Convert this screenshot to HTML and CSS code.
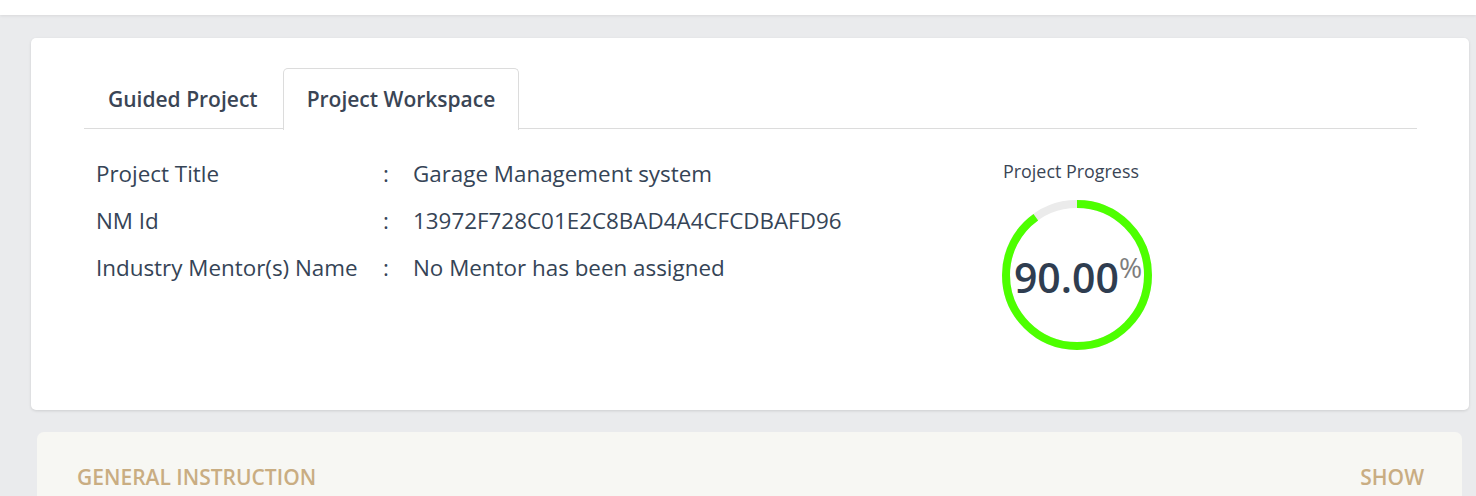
FILE: index.html
```html
<!DOCTYPE html>
<html>
<head>
<meta charset="utf-8">
<link rel="stylesheet" href="styles.css">
</head>
<body>
<header class="topbar"></header>
<main class="page">
  <section class="card">
    <nav class="tabs">
      <div class="tab">Guided Project</div>
      <div class="tab active">Project Workspace</div>
    </nav>
    <div class="content">
      <div class="details">
        <div class="row"><span class="label">Project Title</span><span class="colon">:</span><span class="value">Garage Management system</span></div>
        <div class="row"><span class="label">NM Id</span><span class="colon">:</span><span class="value">13972F728C01E2C8BAD4A4CFCDBAFD96</span></div>
        <div class="row"><span class="label">Industry Mentor(s) Name</span><span class="colon">:</span><span class="value">No Mentor has been assigned</span></div>
      </div>
      <div class="progress">
        <div class="progress-title">Project Progress</div>
        <div class="ring">
          <svg width="150" height="150" viewBox="0 0 150 150">
            <circle cx="75" cy="75" r="71" fill="none" stroke="#ebebeb" stroke-width="8"/>
            <circle cx="75" cy="75" r="71" fill="none" stroke="#4dff00" stroke-width="8"
              stroke-dasharray="401.5 446.1" transform="rotate(-90 75 75)"/>
          </svg>
          <div class="ring-label"><span class="num">90.00</span><span class="pct">%</span></div>
        </div>
      </div>
    </div>
  </section>
  <section class="instr">
    <span class="instr-title">GENERAL INSTRUCTION</span>
    <span class="instr-show">SHOW</span>
  </section>
</main>
</body>
</html>
```
FILE: styles.css
```css
* { box-sizing: border-box; }
html, body { margin: 0; padding: 0; }
body {
  background: #eaebed;
  font-family: "Open Sans", "Noto Sans", sans-serif;
  color: #354456;
  height: 496px;
  overflow: hidden;
}
.topbar {
  height: 15px;
  background: #fff;
  box-shadow: 0 1px 3px rgba(0,0,0,0.08);
}
.page {
  padding: 23px 7px 0 31px;
}
.card {
  background: #fff;
  border-radius: 5px;
  box-shadow: 0 1px 3px rgba(0,0,0,0.12);
  padding: 30px 52px 60px 53px;
}
.tabs {
  display: flex;
  border-bottom: 1px solid #dcdcdc;
  height: 61px;
}
.tab {
  font-size: 21px;
  font-weight: 600;
  color: #3a4555;
  padding: 16px 23px 0 23px;
  margin-right: 1px;
  height: 61px;
  border: 1px solid transparent;
  border-bottom: none;
  border-radius: 5px 5px 0 0;
}
.tab.active {
  border-color: #dcdcdc;
  background: #fff;
  height: 62px;
}
.content {
  display: flex;
  padding-left: 12px;
}
.details {
  width: 906px;
  padding-top: 30px;
  display: flex;
  flex-direction: column;
  gap: 17px;
}
.row {
  display: flex;
  font-size: 22.4px;
  line-height: 30px;
  color: #354456;
}
.label { width: 287px; }
.colon { width: 30px; }
.progress {
  padding-top: 30px;
}
.progress-title {
  font-size: 17.9px;
  line-height: 24px;
  color: #3a4555;
  padding-left: 1px;
}
.ring {
  position: relative;
  width: 150px;
  height: 150px;
  margin-top: 17px;
}
.ring svg { display: block; }
.ring-label {
  position: absolute;
  left: 0; top: 0; right: 0; bottom: 0;
  display: flex;
  align-items: center;
  justify-content: center;
  padding-left: 2px;
  padding-top: 5px;
}
.num {
  font-size: 41px;
  font-weight: 600;
  color: #2f3d50;
  line-height: 1;
}
.pct {
  font-size: 28px;
  line-height: 1;
  color: #7d7d7d;
  align-self: flex-start;
  margin-top: 48px;
}
.instr {
  margin: 22px 7px 0 6px;
  background: #f7f7f3;
  border-radius: 7px;
  padding: 31px 38px 40px 40px;
  display: flex;
  justify-content: space-between;
  font-size: 21px;
  font-weight: 600;
  line-height: 28px;
  color: #c9ad82;
}
```
